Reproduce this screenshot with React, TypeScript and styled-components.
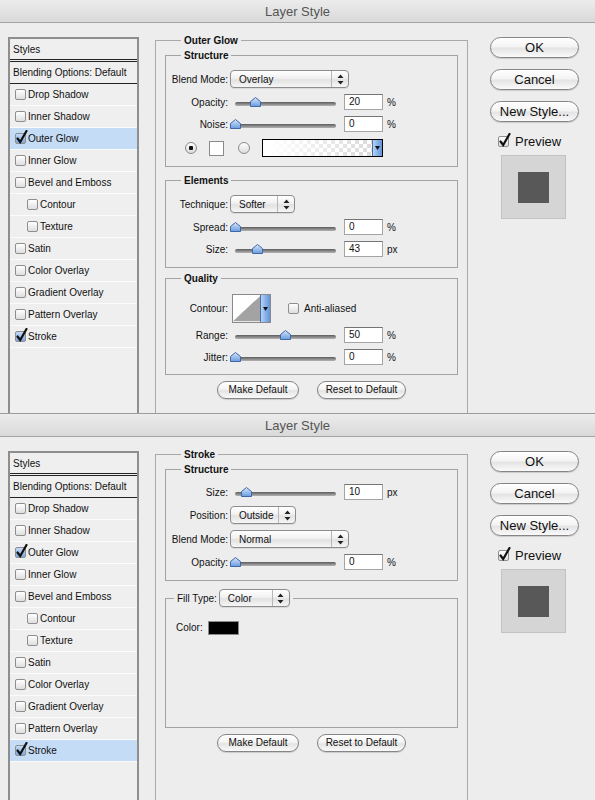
import React from "react"
import styled, { createGlobalStyle } from "styled-components"

const GlobalStyle = createGlobalStyle`
	body {
		margin: 0;
		background: #ededed;
		font-family: "Liberation Sans", Arial, sans-serif;
		color: #111;
	}
`

const Dialog = styled.div<{ $height: number }>`
	box-sizing: border-box;
	height: ${p => p.$height}px;
	overflow: hidden;
	display: flex;
	flex-direction: column;
	background: #ededed;
	border-bottom: 1px solid #9c9c9c;
`

const TitleBar = styled.div`
	box-sizing: border-box;
	height: 23px;
	flex-shrink: 0;
	border-bottom: 1px solid #a3a3a3;
	background: linear-gradient(#ececec, #d9d9d9);
	text-align: center;
	font-size: 13px;
	line-height: 23px;
	color: #555;
`

const Body = styled.div`
	display: flex;
	flex: 1;
	min-height: 0;
	padding: 14px 0 0 8px;
`

// left list of effects
const Sidebar = styled.div`
	box-sizing: border-box;
	width: 131px;
	flex-shrink: 0;
	border: 2px solid #8e8e8e;
	border-bottom: none;
	background: #efefef;
	font-size: 10px;
`

const SideHead = styled.div`
	height: 20px;
	display: flex;
	align-items: center;
	padding-left: 3px;
	border-bottom: 3px double #222;
`

const SideBlend = styled.div`
	height: 21px;
	display: flex;
	align-items: center;
	padding-left: 3px;
	border-bottom: 1px solid #222;
`

const SideItem = styled.div<{ $active?: boolean; $indent?: boolean }>`
	height: 21px;
	display: flex;
	align-items: center;
	gap: 2px;
	padding-left: ${p => (p.$indent ? 17 : 5)}px;
	border-bottom: 1px solid #fbfbfb;
	background: ${p => (p.$active ? "#c5dcf7" : "transparent")};
`

const Box = styled.span<{ $checked?: boolean; $blue?: boolean }>`
	position: relative;
	display: inline-block;
	flex-shrink: 0;
	box-sizing: border-box;
	width: 11px;
	height: 11px;
	border: 1px solid #8e8e8e;
	border-radius: 2px;
	background: ${p =>
		p.$blue ? "linear-gradient(#c4dbf7, #7ea8e2)" : "linear-gradient(#ffffff, #dedede)"};
`

const CheckMark = styled.svg`
	position: absolute;
	left: 0;
	top: -4px;
`

const Checkbox = ({ checked, blue }: { checked?: boolean; blue?: boolean }) => (
	<Box $checked={checked} $blue={checked && blue}>
		{checked && (
			<CheckMark width="12" height="14" viewBox="0 0 12 14">
				<path d="M1.5 8.5 L4.2 12 L10.5 1" fill="none" stroke="#111" strokeWidth="2.2" strokeLinecap="round" />
			</CheckMark>
		)}
	</Box>
)

// middle settings panel
const Main = styled.div`
	width: 313px;
	flex-shrink: 0;
	margin: -3px 0 0 16px;
	display: flex;
	flex-direction: column;
`

const Panel = styled.fieldset`
	flex: 1;
	min-width: 0;
	margin: 0;
	padding: 2px 9px 0;
	border: 1px solid #a9a9a9;
	border-bottom: none;
`

const PanelTitle = styled.legend`
	margin-left: 16px;
	padding: 0 3px;
	font-size: 10px;
	font-weight: bold;
	line-height: 13px;
`

const Group = styled.fieldset<{ $mt?: number; $pb?: number }>`
	min-width: 0;
	margin: ${p => p.$mt ?? 0}px 0 0;
	padding: 5px 0 ${p => p.$pb ?? 7}px;
	border: 1px solid #a3a3a3;
`

const GroupTitle = styled.legend<{ $plain?: boolean }>`
	margin-left: ${p => (p.$plain ? 8 : 15)}px;
	padding: 0 3px;
	font-size: 10px;
	font-weight: ${p => (p.$plain ? "normal" : "bold")};
	line-height: 13px;
	display: flex;
	align-items: center;
`

const Row = styled.div<{ $h: number; $mt?: number }>`
	display: flex;
	align-items: center;
	height: ${p => p.$h}px;
	margin-top: ${p => p.$mt ?? 0}px;
	font-size: 10px;
`

const Label = styled.span`
	width: 62px;
	flex-shrink: 0;
	text-align: right;
`

const SliderWrap = styled.div`
	position: relative;
	width: 104px;
	height: 10px;
	margin-left: 4px;
`

const Track = styled.div`
	position: absolute;
	left: 3px;
	right: 0;
	top: 5px;
	height: 4px;
	border-radius: 2px;
	background: linear-gradient(#5c5c5c, #b4b4b4);
`

const Thumb = styled.svg<{ $pos: number }>`
	position: absolute;
	top: 0;
	left: ${p => 3 + p.$pos * 1.01 - 5.5}px;
`

const NumBox = styled.div`
	box-sizing: border-box;
	width: 39px;
	height: 16px;
	margin-left: 8px;
	padding-left: 4px;
	border: 1px solid #a4a4a4;
	border-top-color: #747474;
	background: #fff;
	line-height: 14px;
`

const Unit = styled.span`
	margin-left: 4px;
`

const Select = styled.div<{ $w: number; $h?: number }>`
	box-sizing: border-box;
	display: flex;
	align-items: center;
	width: ${p => p.$w}px;
	height: ${p => p.$h ?? 18}px;
	margin-left: 2px;
	border: 1px solid #8c8c8c;
	border-radius: 4px;
	background: linear-gradient(#ffffff, #f1f1f1 45%, #e2e2e2 55%, #f6f6f6);
	box-shadow: 0 1px 0 rgba(0, 0, 0, 0.08);
	font-size: 10px;
	font-weight: normal;
`

const SelectText = styled.span`
	flex: 1;
	padding-left: 8px;
`

const SelectArrows = styled.span`
	width: 16px;
	height: 100%;
	display: flex;
	align-items: center;
	justify-content: center;
	border-left: 1px solid #b7b7b7;
`

const Updown = () => (
	<svg width="7" height="11" viewBox="0 0 7 11">
		<path d="M3.5 0.5 L6.5 4 L0.5 4 Z M0.5 7 L6.5 7 L3.5 10.5 Z" fill="#222" />
	</svg>
)

const Radio = styled.span<{ $on?: boolean; $ml: number }>`
	box-sizing: border-box;
	width: 12px;
	height: 12px;
	margin-left: ${p => p.$ml}px;
	border-radius: 50%;
	border: 1px solid #8a8a8a;
	background: ${p =>
		p.$on
			? "radial-gradient(circle, #111 0 2px, transparent 2.5px), linear-gradient(#ffffff, #dcdcdc)"
			: "linear-gradient(#ffffff, #dcdcdc)"};
`

const Swatch = styled.span<{ $color: string; $w: number; $h: number; $ml: number }>`
	box-sizing: border-box;
	width: ${p => p.$w}px;
	height: ${p => p.$h}px;
	margin-left: ${p => p.$ml}px;
	border: 1px solid #8a8a8a;
	background: ${p => p.$color};
`

const GradientPicker = styled.div`
	box-sizing: border-box;
	display: flex;
	width: 121px;
	height: 18px;
	margin-left: 12px;
	border: 1px solid #000;
`

const GradientFill = styled.div`
	flex: 1;
	background:
		linear-gradient(to right, #fff 5%, rgba(255, 255, 255, 0) 95%),
		repeating-conic-gradient(#dcdcdc 0 25%, #ffffff 0 50%) 0 0 / 8px 8px;
`

const DropTab = styled.div`
	width: 9px;
	display: flex;
	align-items: center;
	justify-content: center;
	border-left: 1px solid #4d6d9a;
	background: linear-gradient(to right, #b5d1f5, #5f95dc);
`

const Contour = styled.div`
	box-sizing: border-box;
	display: flex;
	width: 39px;
	height: 29px;
	margin-left: 4px;
	border: 1px solid #8a8a8a;
	background: #fff;
`

const OptLabel = styled.span`
	margin-left: 5px;
`

const Buttons = styled.div`
	display: flex;
	justify-content: center;
	gap: 18px;
	margin-top: 6px;
`

const PillButton = styled.div<{ $w: number; $big?: boolean }>`
	box-sizing: border-box;
	width: ${p => p.$w}px;
	height: ${p => (p.$big ? 21 : 18)}px;
	border: 1px solid #858585;
	border-radius: 11px;
	background: linear-gradient(#ffffff, #f4f4f4 45%, #e4e4e4 55%, #fafafa);
	box-shadow: 0 1px 1px rgba(0, 0, 0, 0.15);
	text-align: center;
	font-size: ${p => (p.$big ? 13 : 10)}px;
	line-height: ${p => (p.$big ? 19 : 16)}px;
	color: #111;
`

// right column
const Side = styled.div`
	width: 89px;
	flex-shrink: 0;
	margin-left: 22px;
	display: flex;
	flex-direction: column;
	gap: 11px;
`

const PreviewRow = styled.div`
	display: flex;
	align-items: center;
	height: 14px;
	margin-top: 1px;
	padding-left: 8px;
	font-size: 13px;
	gap: 6px;
`

const PreviewBox = styled.div`
	box-sizing: border-box;
	width: 65px;
	height: 64px;
	margin: -4px 0 0 11px;
	border: 1px solid #c2c2c2;
	background: #d5d5d5;
	display: flex;
	align-items: center;
	justify-content: center;
`

const PreviewShape = styled.div`
	width: 31px;
	height: 31px;
	background: #585858;
`

const Slider = ({ pos }: { pos: number }) => (
	<SliderWrap>
		<Track />
		<Thumb $pos={pos} width="11" height="10" viewBox="0 0 11 10">
			<defs>
				<linearGradient id="thumb" x1="0" y1="0" x2="0" y2="1">
					<stop offset="0" stopColor="#d6e6fa" />
					<stop offset="1" stopColor="#6a9be0" />
				</linearGradient>
			</defs>
			<path d="M5.5 0.5 L10.5 4.5 L10.5 9.5 L0.5 9.5 L0.5 4.5 Z" fill="url(#thumb)" stroke="#3f68a6" />
		</Thumb>
	</SliderWrap>
)

const SliderRow = ({ label, pos, value, unit }: { label: string; pos: number; value: string; unit: string }) => (
	<Row $h={22}>
		<Label>{label}:</Label>
		<Slider pos={pos} />
		<NumBox>{value}</NumBox>
		<Unit>{unit}</Unit>
	</Row>
)

const SelectRow = ({ label, value, w }: { label: string; value: string; w: number }) => (
	<Row $h={24}>
		<Label>{label}:</Label>
		<Select $w={w}>
			<SelectText>{value}</SelectText>
			<SelectArrows>
				<Updown />
			</SelectArrows>
		</Select>
	</Row>
)

const DownTab = () => (
	<DropTab>
		<svg width="5" height="4" viewBox="0 0 5 4">
			<path d="M0 0 H5 L2.5 4 Z" fill="#111" />
		</svg>
	</DropTab>
)

const effects = [
	{ name: "Drop Shadow" },
	{ name: "Inner Shadow" },
	{ name: "Outer Glow" },
	{ name: "Inner Glow" },
	{ name: "Bevel and Emboss" },
	{ name: "Contour", indent: true },
	{ name: "Texture", indent: true },
	{ name: "Satin" },
	{ name: "Color Overlay" },
	{ name: "Gradient Overlay" },
	{ name: "Pattern Overlay" },
	{ name: "Stroke" },
]

const enabled = ["Outer Glow", "Stroke"]

const LayerStyle = ({ height, active, children }: { height: number; active: string; children: React.ReactNode }) => (
	<Dialog $height={height}>
		<TitleBar>Layer Style</TitleBar>
		<Body>
			<Sidebar>
				<SideHead>Styles</SideHead>
				<SideBlend>Blending Options: Default</SideBlend>
				{effects.map(e => (
					<SideItem key={e.name} $active={e.name === active} $indent={e.indent}>
						<Checkbox checked={enabled.includes(e.name)} blue />
						{e.name}
					</SideItem>
				))}
			</Sidebar>
			<Main>{children}</Main>
			<Side>
				<PillButton $w={89} $big>OK</PillButton>
				<PillButton $w={89} $big>Cancel</PillButton>
				<PillButton $w={89} $big>New Style...</PillButton>
				<PreviewRow>
					<Checkbox checked />
					Preview
				</PreviewRow>
				<PreviewBox>
					<PreviewShape />
				</PreviewBox>
			</Side>
		</Body>
	</Dialog>
)

const DefaultButtons = () => (
	<Buttons>
		<PillButton $w={82}>Make Default</PillButton>
		<PillButton $w={89}>Reset to Default</PillButton>
	</Buttons>
)

const OuterGlowPanel = () => (
	<Panel>
		<PanelTitle>Outer Glow</PanelTitle>
		<Group>
			<GroupTitle>Structure</GroupTitle>
			<SelectRow label="Blend Mode" value="Overlay" w={119} />
			<SliderRow label="Opacity" pos={20} value="20" unit="%" />
			<SliderRow label="Noise" pos={0} value="0" unit="%" />
			<Row $h={22} $mt={2}>
				<Radio $on $ml={19} />
				<Swatch $color="#fff" $w={15} $h={15} $ml={12} />
				<Radio $ml={14} />
				<GradientPicker>
					<GradientFill />
					<DownTab />
				</GradientPicker>
			</Row>
		</Group>
		<Group $mt={7}>
			<GroupTitle>Elements</GroupTitle>
			<SelectRow label="Technique" value="Softer" w={65} />
			<SliderRow label="Spread" pos={0} value="0" unit="%" />
			<SliderRow label="Size" pos={22} value="43" unit="px" />
		</Group>
		<Group $mt={4} $pb={6}>
			<GroupTitle>Quality</GroupTitle>
			<Row $h={31} $mt={3}>
				<Label>Contour:</Label>
				<Contour>
					<svg width="29" height="27" viewBox="0 0 29 27">
						<path d="M0 27 L29 0 L29 27 Z" fill="#a3a3a3" />
					</svg>
					<DownTab />
				</Contour>
				<Row $h={31}>
					<span style={{ width: 17 }} />
					<Checkbox />
					<OptLabel>Anti-aliased</OptLabel>
				</Row>
			</Row>
			<SliderRow label="Range" pos={50} value="50" unit="%" />
			<SliderRow label="Jitter" pos={0} value="0" unit="%" />
		</Group>
		<DefaultButtons />
	</Panel>
)

const FillRow = styled(Row)`
	padding-left: 10px;
	margin-top: 8px;
`

const StrokePanel = () => (
	<Panel>
		<PanelTitle>Stroke</PanelTitle>
		<Group>
			<GroupTitle>Structure</GroupTitle>
			<SliderRow label="Size" pos={11} value="10" unit="px" />
			<SelectRow label="Position" value="Outside" w={66} />
			<SelectRow label="Blend Mode" value="Normal" w={119} />
			<SliderRow label="Opacity" pos={0} value="0" unit="%" />
		</Group>
		<Group $mt={8} $pb={92}>
			<GroupTitle $plain>
				Fill Type:
				<Select $w={71} $h={18}>
					<SelectText>Color</SelectText>
					<SelectArrows>
						<Updown />
					</SelectArrows>
				</Select>
			</GroupTitle>
			<FillRow $h={15}>
				Color:
				<Swatch $color="#000" $w={31} $h={14} $ml={5} />
			</FillRow>
		</Group>
		<DefaultButtons />
	</Panel>
)

export default function App() {
	return (
		<>
			<GlobalStyle />
			<LayerStyle height={414} active="Outer Glow">
				<OuterGlowPanel />
			</LayerStyle>
			<LayerStyle height={387} active="Stroke">
				<StrokePanel />
			</LayerStyle>
		</>
	)
}
